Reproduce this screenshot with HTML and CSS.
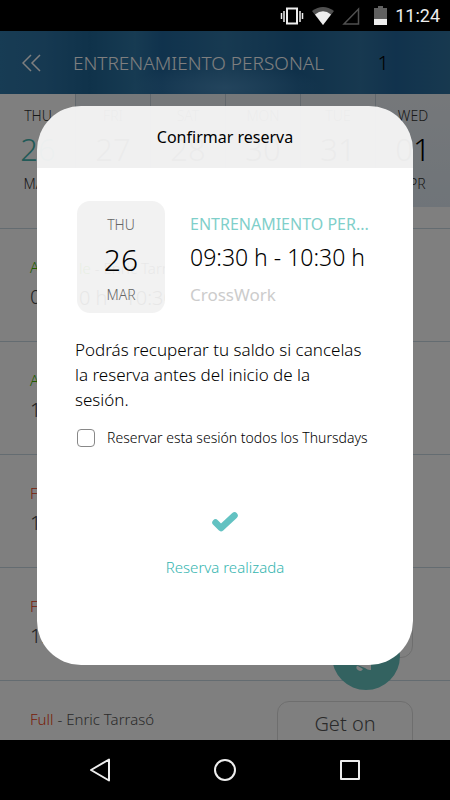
FILE: index.html
```html
<!DOCTYPE html>
<html lang="es">
<head>
<meta charset="utf-8">
<meta name="viewport" content="width=device-width, initial-scale=1">
<title>Confirmar reserva</title>
<link rel="stylesheet" href="styles.css">
</head>
<body>
<div class="phone">
  <div class="status">
    <svg width="24" height="18" viewBox="0 0 24 18" fill="none" stroke="#eee"><rect x="7" y="1.500" width="10" height="15" stroke-width="2"/><path d="M4 4v11M20 4v11" stroke-width="1.500"/><path d="M1.500 6v6M22.500 6v6" stroke-width="1.500"/></svg>
    <svg width="22" height="18" viewBox="0 0 22 18"><path d="M0 4Q11-4 22 4L11 18z" fill="#505050"/><path d="M3 7.500Q11 1 19 7.500L11 18z" fill="#eee"/></svg>
    <svg width="18" height="18" viewBox="0 0 18 18" fill="none" stroke="#505050" stroke-width="1.500"><path d="M2 17H16.500V2z"/></svg>
    <svg class="battery" width="13" height="19" viewBox="0 0 13 19"><path d="M0 2h4V0h5v2h4v17H0z" fill="#606060"/><path d="M0 13h13v6H0z" fill="#eee"/></svg>
    <span class="clock">11:24</span>
  </div>
  <main class="app">
    <header class="bar">
      <button class="back" aria-label="Volver"><svg width="20" height="18" viewBox="0 0 20 18" fill="none" stroke="currentColor" stroke-width="1.500"><path d="M9 1L1 9l8 8M18 1l-8 8 8 8"/></svg></button>
      <h1 class="title">ENTRENAMIENTO PERSONAL</h1>
      <span class="count">1</span>
    </header>
    <div class="days">
      <div class="day current"><span>THU</span><b>26</b><span>MAR</span></div>
      <div class="day"><span>FRI</span><b>27</b><span>MAR</span></div>
      <div class="day"><span>SAT</span><b>28</b><span>MAR</span></div>
      <div class="day"><span>MON</span><b>30</b><span>MAR</span></div>
      <div class="day"><span>TUE</span><b>31</b><span>MAR</span></div>
      <div class="day"><span>WED</span><b>01</b><span>APR</span></div>
    </div>
    <div class="sessions">
      <div class="session"><div><p class="who"><span class="free">Available</span> - Enric Tarrasó</p><p class="hour">09:30 h - 10:30 h</p></div><button class="join">Get on</button></div>
      <div class="session"><div><p class="who"><span class="free">Available</span> - Enric Tarrasó</p><p class="hour">10:30 h - 11:30 h</p></div><button class="join">Get on</button></div>
      <div class="session"><div><p class="who"><span class="full">Full</span> - Enric Tarrasó</p><p class="hour">11:30 h - 12:30 h</p></div><button class="join">Get on</button></div>
      <div class="session"><div><p class="who"><span class="full">Full</span> - Enric Tarrasó</p><p class="hour">12:30 h - 13:30 h</p></div><button class="join">Get on</button></div>
      <div class="session"><div><p class="who"><span class="full">Full</span> - Enric Tarrasó</p></div><button class="join">Get on</button></div>
    </div>
    <button class="fab" aria-label="Avisos"><svg width="36" height="36" viewBox="0 0 36 36" fill="#fff"><path d="M7 16L23 4V32Q20 32.500 17 30L7 26z"/><path d="M9 27.500L15 31A3.400 3.400 0 1 1 9 27.500z"/></svg></button>
    <div class="overlay">
      <section class="dialog" role="dialog" aria-labelledby="dialog-title">
        <h2 class="dialog-title" id="dialog-title">Confirmar reserva</h2>
        <div class="dialog-body">
          <div class="booking">
            <div class="date">
              <span>THU</span><b>26</b><span>MAR</span>
              <div class="shade" aria-hidden="true"><p class="who"><span class="free">le</span> - Enric Tarr</p><p class="hour">0 h - 10:30</p></div>
            </div>
            <div class="details">
              <p class="activity">ENTRENAMIENTO PER...</p>
              <p class="time">09:30 h - 10:30 h</p>
              <p class="room">CrossWork</p>
            </div>
          </div>
          <p class="note">Podrás recuperar tu saldo si cancelas la reserva antes del inicio de la sesión.</p>
          <label class="repeat"><input type="checkbox"><span>Reservar esta sesión todos los Thursdays</span></label>
          <div class="done">
            <svg width="28" height="22" viewBox="0 0 28 22" fill="none" stroke="#63c2c2" stroke-width="6.500" stroke-linecap="round" stroke-linejoin="round"><path d="M4.500 11.500L10 17 23.500 4.500"/></svg>
            <p>Reserva realizada</p>
          </div>
        </div>
      </section>
    </div>
  </main>
  <nav class="keys">
    <button aria-label="Atrás"><svg width="24" height="26" viewBox="0 0 24 26" fill="none" stroke="#eee" stroke-width="2" stroke-linejoin="round"><path d="M21 2.500v21L3 13z"/></svg></button>
    <button aria-label="Inicio"><svg width="24" height="26" viewBox="0 0 24 26" fill="none" stroke="#eee" stroke-width="2"><circle cx="12" cy="13" r="10"/></svg></button>
    <button aria-label="Recientes"><svg width="24" height="26" viewBox="0 0 24 26" fill="none" stroke="#eee" stroke-width="2" stroke-linejoin="round"><path d="M3 4h18v18H3z"/></svg></button>
  </nav>
</div>
</body>
</html>
```
FILE: styles.css
```css
* { box-sizing: border-box; }
body, p, h1, h2 { margin: 0; }
body { font-family: "Noto Sans", "Open Sans", sans-serif; font-weight: 300; color: #000; background: #000; }
button { font: inherit; color: inherit; padding: 0; border: 0; background: none; }
svg { display: block; }
.phone { display: flex; flex-direction: column; height: 100vh; }

.status { flex: none; display: flex; align-items: center; justify-content: flex-end; height: 31px; gap: 8px; padding-right: 10px; background: #000; color: #eee; }
.status .clock { font: 400 18px/24px Roboto, sans-serif; }
.status .battery { margin-left: 6px; }

.app { flex: 1; min-height: 0; position: relative; overflow: hidden; background: #fff; }
.bar { display: flex; align-items: center; height: 63px; padding: 0 61px 0 22px; color: #fff;
  background: radial-gradient(ellipse at 50% 90%, rgba(80, 145, 195, .7) 0, transparent 30%), linear-gradient(90deg, #2f78a8, #2c72a3 10%, #1f6595 20%, #2e76a5 30%, #20659a 36%, #2f74a3 50%, #1f6294 66%, #2f72a0 80%, #22659a 88%, #2f729f); }
.back { margin-right: 31px; }
.title { flex: 1; font-size: 19px; font-weight: 300; white-space: nowrap; }
.count { font-size: 20px; color: #000; }

.days { display: grid; grid-template-columns: repeat(6, 1fr); height: 113px; background: linear-gradient(#ebf0f5, #dfe9f2); }
.day { display: flex; flex-direction: column; align-items: center; padding-top: 12px; border-left: 1px solid #c5d0da; font-size: 14px; line-height: 20px; color: #333; }
.day b { font-size: 31px; line-height: 46px; font-weight: 300; color: #000; }
.day span:last-child { margin-top: 2px; }
.day.current { background: #fff; border-color: #fff; }
.day.current b { color: #45b5b0; }

.sessions { padding-top: 21px; }
.session { display: flex; justify-content: space-between; align-items: flex-start; height: 113px; padding: 20px 37px 0 30px; border-top: 1px solid #c9d9e3; }
.session > div { padding-top: 7px; }
.who { font-size: 15px; line-height: 22px; color: #555; }
.hour { font-size: 20px; line-height: 30px; padding-top: 4px; color: #444; }
.free { color: #46b800; }
.full { color: #f04010; }
.join { width: 136px; height: 70px; padding-bottom: 24px; border: 1px solid #ddd; border-radius: 12px; font-size: 20px; line-height: 28px; color: #555; }

.fab { position: absolute; right: 50px; bottom: 50px; width: 68px; height: 68px; border-radius: 50%; background: #66c4c1; display: grid; place-items: center; }

.overlay { position: absolute; inset: 0; display: flex; flex-direction: column; padding: 75px 37px; background: rgba(0, 0, 0, .5); }
.dialog { flex: 1; display: flex; flex-direction: column; border-radius: 44px; overflow: hidden; }
.dialog-title { height: 62px; background: rgba(246, 246, 246, .955); font-size: 16px; line-height: 62px; font-weight: 400; text-align: center; }
.dialog-body { flex: 1; padding: 33px 38px 0 38px; background: #fff; }
.booking { display: flex; gap: 25px; padding-left: 2px; }
.date { position: relative; overflow: hidden; flex: none; display: flex; flex-direction: column; align-items: center; width: 88px; height: 112px; padding-top: 14px; border-radius: 13px; background: #f2f2f2; font-size: 14px; line-height: 20px; color: #666; }
.date b { font-size: 30px; line-height: 50px; font-weight: 300; color: #000; }
.shade { position: absolute; left: 2px; top: 56px; opacity: .06; white-space: nowrap; }
.details { min-width: 0; white-space: nowrap; }
.activity { padding-top: 11px; font-size: 16px; line-height: 24px; color: #7fcfca; font-weight: 400; }
.time { font-size: 23px; line-height: 42px; }
.room { padding-top: 4px; font-size: 17px; line-height: 26px; color: #ccc; font-weight: 400; }
.note { padding: 24px 8px 0 0; font-size: 17px; line-height: 25px; }
.repeat { display: flex; align-items: center; gap: 12px; padding: 14px 0 0 2px; font-size: 14px; line-height: 24px; white-space: nowrap; }
.repeat input { appearance: none; flex: none; margin: 0; width: 18px; height: 18px; border: 1px solid #888; border-radius: 4px; background: #fff; }
.done { display: flex; flex-direction: column; align-items: center; gap: 22px; padding-top: 61px; color: #35b5b0; font-size: 15px; line-height: 24px; }

.keys { flex: none; display: flex; justify-content: center; gap: 101px; height: 60px; background: #000; }
```
